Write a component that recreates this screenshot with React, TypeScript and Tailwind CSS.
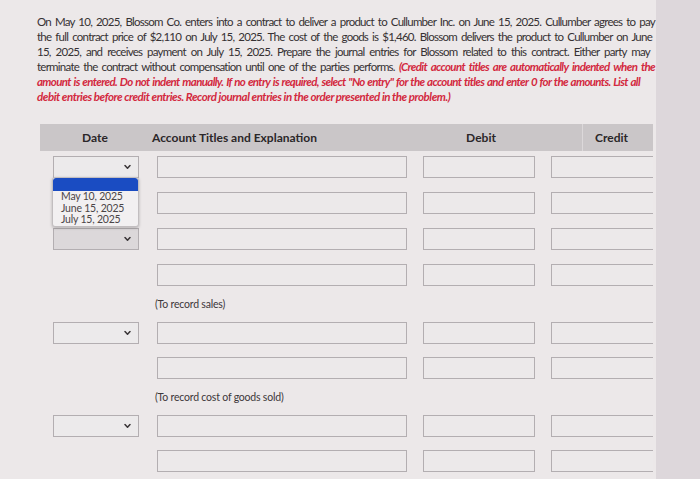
import React from "react";

const Chevron = () => (
  <svg width="7" height="5" viewBox="0 0 7 5" className="absolute right-[7px] top-1/2 -translate-y-1/2">
    <polyline points="1,1 3.5,3.8 6,1" fill="none" stroke="#3b3638" strokeWidth="1.5" strokeLinecap="round" strokeLinejoin="round" />
  </svg>
);

const Box = ({ w, ml, noRight }: { w: number; ml: number; noRight?: boolean }) => (
  <div
    className={`h-[22px] border border-[#b3aeb1] bg-[#ece9ea] ${noRight ? "border-r-0" : ""}`}
    style={{ width: w, marginLeft: ml }}
  />
);

const Row = ({ date, dark, dropdown }: { date?: boolean; dark?: boolean; dropdown?: boolean }) => (
  <div className="flex items-center h-[22px]">
    <div className="w-[117px] h-[22px] relative">
      {date && (
        <div
          className={`absolute left-[13px] top-0 w-[86px] h-[22px] border border-[#b3aeb1] ${dark ? "bg-[#dcd8da]" : "bg-[#eceaeb]"}`}
        >
          <Chevron />
        </div>
      )}
      {dropdown && (
        <div className="absolute left-[12px] top-[21px] w-[87px] h-[50px] z-10 bg-[#f2f0f1] border border-[#c2bec0] rounded-[3px] shadow-[0_1px_3px_rgba(0,0,0,0.25)] overflow-hidden">
          <div className="h-[13px] bg-[#1a4cc2] rounded-t-[3px]" />
          <div className="pl-[8px] text-[10.5px] leading-[11.5px] text-[#4a4547] tracking-[-0.2px]">
            <div>May 10, 2025</div>
            <div>June 15, 2025</div>
            <div>July 15, 2025</div>
          </div>
        </div>
      )}
    </div>
    <Box w={250} ml={0} />
    <Box w={112} ml={16} />
    <Box w={102} ml={16} noRight />
  </div>
);

const Label = ({ children }: { children: React.ReactNode }) => (
  <div className="h-[14px] pl-[115px] text-[10.5px] leading-[14px] text-[#3d3739] tracking-[-0.2px]">{children}</div>
);

export default function App() {
  const line = "text-justify [text-align-last:justify]";
  const red = "text-[#d3283e] font-bold italic tracking-[-0.65px]";
  return (
    <div className="w-[700px] h-[479px] overflow-hidden flex font-['Lato',sans-serif]">
      <div className="w-[656px] h-full bg-[#ece8e9] pl-[37px] pt-[14px]">
        <div className="text-[11.5px] leading-[15px] text-[#363133] tracking-[-0.75px]">
          <div className={`w-[618px] ${line}`}>
            On May 10, 2025, Blossom Co. enters into a contract to deliver a product to Cullumber Inc. on June 15, 2025. Cullumber agrees to pay
          </div>
          <div className={`w-[615px] ${line}`}>
            the full contract price of $2,110 on July 15, 2025. The cost of the goods is $1,460. Blossom delivers the product to Cullumber on June
          </div>
          <div className={`w-[613px] ${line}`}>
            15, 2025, and receives payment on July 15, 2025. Prepare the journal entries for Blossom related to this contract. Either party may
          </div>
          <div className={`w-[618px] ${line}`}>
            terminate the contract without compensation until one of the parties performs.{" "}
            <span className={red}>(Credit account titles are automatically indented when the</span>
          </div>
          <div className={`w-[603px] ${line} ${red}`}>
            amount is entered. Do not indent manually. If no entry is required, select "No entry" for the account titles and enter 0 for the amounts. List all
          </div>
          <div className="text-[#d3283e] font-bold italic tracking-[-0.45px]">
            debit entries before credit entries. Record journal entries in the order presented in the problem.)
          </div>
        </div>

        <div className="ml-[3px] mt-[20px] w-[613px]">
          <div className="h-[27px] bg-[#cac6c8] flex items-center text-[12px] font-bold text-[#2b2729]">
            <div className="w-[110px] text-center">Date</div>
            <div className="w-[300px] pl-[2px]">Account Titles and Explanation</div>
            <div className="w-[62px] text-center">Debit</div>
            <div className="w-[71px] h-full border-r border-[#dcd8da]" />
            <div className="pl-[12px]">Credit</div>
          </div>

          <div className="flex flex-col gap-[14px] mt-[5px]">
            <Row date dropdown />
            <Row />
            <Row date dark />
            <Row />
          </div>
          <div className="mt-[11px]">
            <Label>(To record sales)</Label>
          </div>
          <div className="flex flex-col gap-[13px] mt-[11px]">
            <Row date />
            <Row />
          </div>
          <div className="mt-[11px]">
            <Label>(To record cost of goods sold)</Label>
          </div>
          <div className="flex flex-col gap-[13px] mt-[11px]">
            <Row date />
            <Row />
          </div>
        </div>
      </div>
      <div className="flex-1 h-full bg-[#ddd7db]" />
    </div>
  );
}
